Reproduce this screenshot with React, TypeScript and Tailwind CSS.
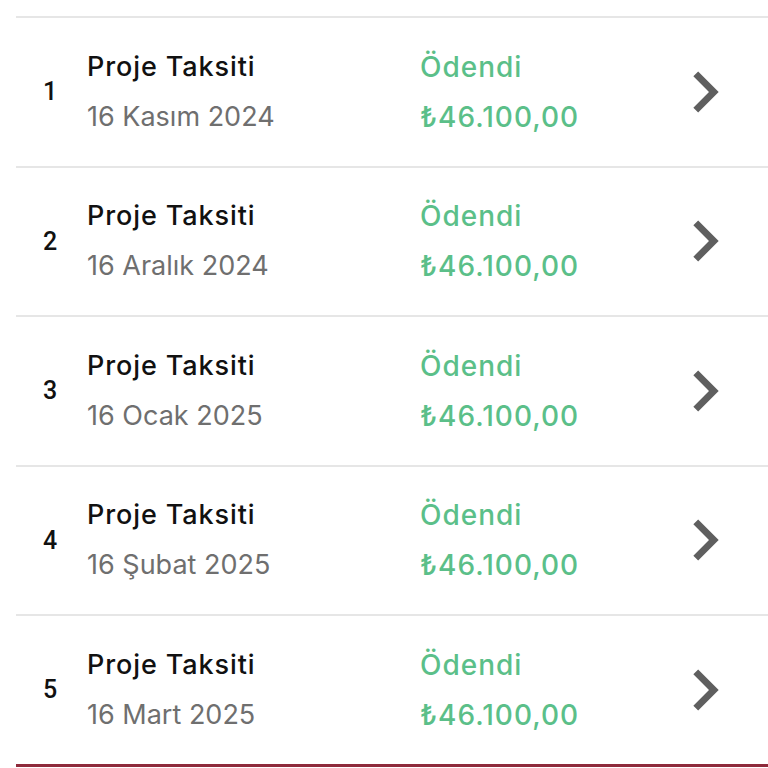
import React from "react";

type Installment = {
  no: number;
  title: string;
  date: string;
  status: string;
  amount: string;
};

const items: Installment[] = [
  { no: 1, title: "Proje Taksiti", date: "16 Kasım 2024", status: "Ödendi", amount: "₺46.100,00" },
  { no: 2, title: "Proje Taksiti", date: "16 Aralık 2024", status: "Ödendi", amount: "₺46.100,00" },
  { no: 3, title: "Proje Taksiti", date: "16 Ocak 2025", status: "Ödendi", amount: "₺46.100,00" },
  { no: 4, title: "Proje Taksiti", date: "16 Şubat 2025", status: "Ödendi", amount: "₺46.100,00" },
  { no: 5, title: "Proje Taksiti", date: "16 Mart 2025", status: "Ödendi", amount: "₺46.100,00" },
];

function ChevronRight() {
  return (
    <svg viewBox="0 0 24 24" className="h-[82px] w-[82px] fill-[#5f5f5f]">
      <path d="M10 6L8.59 7.41 13.17 12l-4.58 4.59L10 18l6-6z" />
    </svg>
  );
}

function Row({ item }: { item: Installment }) {
  return (
    <div className="flex h-[149.5px] items-center border-t-2 border-[#e6e6e6]">
      <span className="w-[71px] pl-[27px] font-['Roboto',sans-serif] text-[25px] font-medium text-[#111]">
        {item.no}
      </span>
      <div className="flex w-[333px] flex-col">
        <span className="text-[27px] leading-[50px] font-medium tracking-[0.9px] text-[#111]">
          {item.title}
        </span>
        <span className="text-[27px] leading-[50px] text-[#6f6f6f]">{item.date}</span>
      </div>
      <div className="flex w-[244px] flex-col text-[28px] font-medium tracking-[1px] text-[#5bbf89]">
        <span className="leading-[50px]">{item.status}</span>
        <span className="leading-[50px]">{item.amount}</span>
      </div>
      <ChevronRight />
    </div>
  );
}

export default function App() {
  return (
    <div className="h-[768px] w-[768px] overflow-hidden bg-white pt-[16px] pl-[16px] font-['Inter','DejaVu_Sans',sans-serif]">
      {items.map((it) => (
        <Row key={it.no} item={it} />
      ))}
      <div className="border-t-[3px] border-[#8e2a3b]" />
    </div>
  );
}
